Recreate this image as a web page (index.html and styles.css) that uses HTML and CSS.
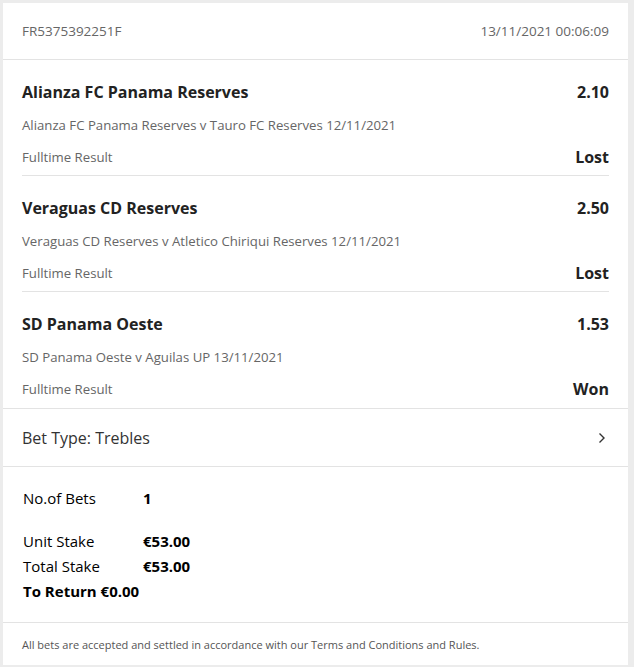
FILE: index.html
```html
<!DOCTYPE html>
<html>
<head>
<meta charset="utf-8">
<link rel="stylesheet" href="styles.css">
</head>
<body>
<div class="card">
  <div class="head">
    <span>FR5375392251F</span>
    <span>13/11/2021 00:06:09</span>
  </div>
  <div class="sels">
    <div class="sel">
      <div class="row title"><span>Alianza FC Panama Reserves</span><span>2.10</span></div>
      <div class="row sub"><span>Alianza FC Panama Reserves v Tauro FC Reserves 12/11/2021</span></div>
      <div class="row market"><span>Fulltime Result</span><span class="res">Lost</span></div>
    </div>
    <div class="sel">
      <div class="row title"><span>Veraguas CD Reserves</span><span>2.50</span></div>
      <div class="row sub"><span>Veraguas CD Reserves v Atletico Chiriqui Reserves 12/11/2021</span></div>
      <div class="row market"><span>Fulltime Result</span><span class="res">Lost</span></div>
    </div>
    <div class="sel">
      <div class="row title"><span>SD Panama Oeste</span><span>1.53</span></div>
      <div class="row sub"><span>SD Panama Oeste v Aguilas UP 13/11/2021</span></div>
      <div class="row market"><span>Fulltime Result</span><span class="res">Won</span></div>
    </div>
  </div>
  <div class="bettype">
    <span>Bet Type: Trebles</span>
    <svg class="chev" width="8" height="12" viewBox="0 0 8 12"><path d="M1.5 1.5 L6 6 L1.5 10.5" fill="none" stroke="#333" stroke-width="1.4"/></svg>
  </div>
  <div class="summary">
    <div class="srow gap"><span class="lbl">No.of Bets</span><b>1</b></div>
    <div class="srow"><span class="lbl">Unit Stake</span><b>€53.00</b></div>
    <div class="srow"><span class="lbl">Total Stake</span><b>€53.00</b></div>
    <div class="srow"><b>To Return €0.00</b></div>
  </div>
  <div class="foot">All bets are accepted and settled in accordance with our Terms and Conditions and Rules.</div>
</div>
</body>
</html>
```
FILE: styles.css
```css
html, body {
  margin: 0;
  padding: 0;
  background: #ececec;
}
body {
  font-family: "Open Sans", "Noto Sans", sans-serif;
  padding: 3px 6px 2px 3px;
  height: 667px;
  box-sizing: border-box;
}
.card {
  background: #fff;
  height: 662px;
  display: flex;
  flex-direction: column;
}
.head {
  height: 56px;
  display: flex;
  justify-content: space-between;
  align-items: center;
  padding: 0 19px 0 19px;
  color: #666;
  font-size: 13.5px;
  border-bottom: 1px solid #e3e3e3;
}
.sels {
  padding: 0 19px;
}
.sel {
  border-bottom: 1px solid #e3e3e3;
  height: 116px;
  box-sizing: border-box;
  display: flex;
  flex-direction: column;
  padding-top: 20px;
}
.sel:last-child {
  border-bottom: none;
}
.row {
  display: flex;
  justify-content: space-between;
  align-items: center;
}
.title {
  font-size: 16px;
  font-weight: 700;
  color: #222;
  height: 24px;
}
.sub {
  font-size: 13.2px;
  color: #666;
  margin-top: 11px;
  height: 20px;
}
.market {
  font-size: 13.2px;
  color: #666;
  margin-top: 11px;
  height: 22px;
}
.res {
  font-size: 16px;
  font-weight: 700;
  color: #222;
}
.bettype {
  border-top: 1px solid #e3e3e3;
  border-bottom: 1px solid #e3e3e3;
  height: 57px;
  display: flex;
  justify-content: space-between;
  align-items: center;
  padding: 0 22px 0 19px;
  font-size: 16px;
  color: #333;
}
.summary {
  padding: 18px 20px 19px 20px;
  border-bottom: 1px solid #e3e3e3;
  color: #000;
  font-size: 15px;
}
.srow {
  display: flex;
  height: 25px;
  align-items: center;
}
.srow.gap {
  margin-bottom: 18px;
}
.lbl {
  width: 120px;
}
.foot {
  flex: 1;
  display: flex;
  align-items: center;
  padding: 0 19px 0 19px;
  font-size: 11px;
  color: #555;
}
```
